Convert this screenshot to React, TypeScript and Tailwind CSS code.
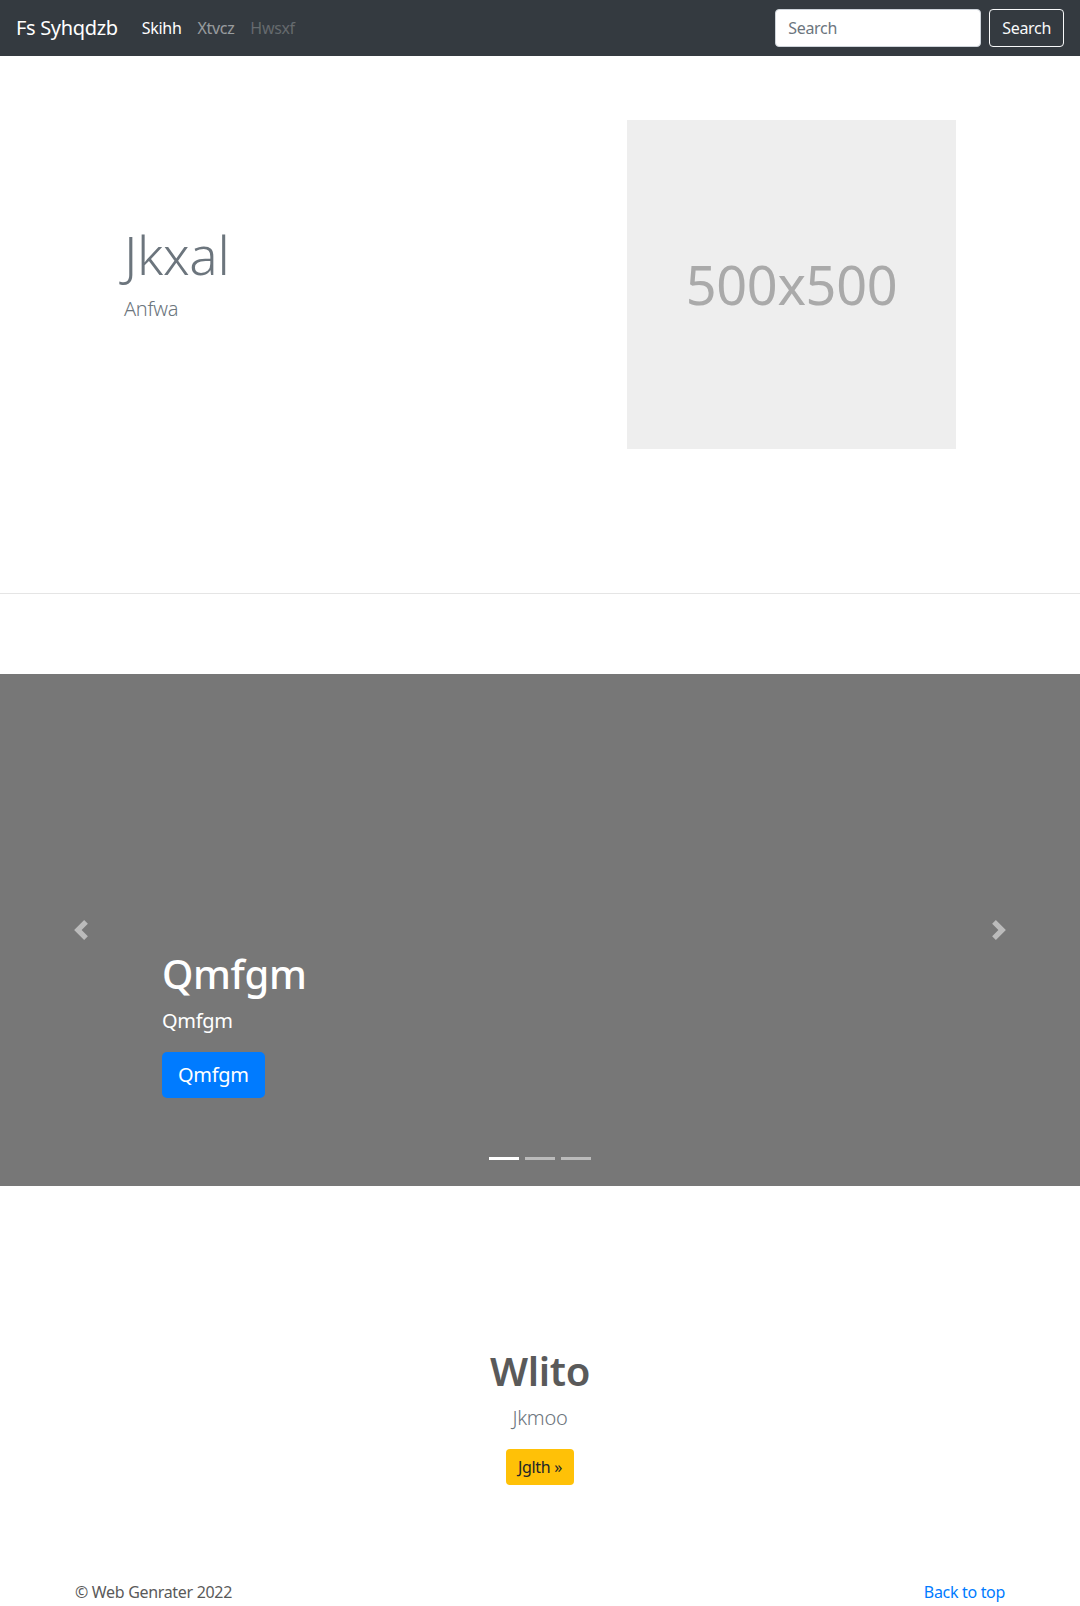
import React from "react";

const font = { fontFamily: '"Noto Sans", "Open Sans", Roboto, sans-serif' };

const Navbar = () => (
  <nav className="flex h-14 items-center bg-[#343a40] px-4">
    <a href="#" className="mr-4 py-[5px] text-xl leading-[1.5] text-white">
      Fs Syhqdzb
    </a>
    <ul className="flex items-center">
      <li>
        <a href="#" className="block px-2 py-2 text-base text-white">
          Skihh
        </a>
      </li>
      <li>
        <a href="#" className="block px-2 py-2 text-base text-white/50">
          Xtvcz
        </a>
      </li>
      <li>
        <span className="block px-2 py-2 text-base text-white/25">Hwsxf</span>
      </li>
    </ul>
    <form className="ml-auto flex items-center">
      <input
        type="text"
        placeholder="Search"
        className="h-[38px] w-[206px] rounded border border-[#ced4da] bg-white px-3 text-base text-[#495057] placeholder:text-[#6c757d] focus:outline-none"
      />
      <button
        type="button"
        className="ml-2 h-[38px] rounded border border-[#f8f9fa] px-3 text-base text-[#f8f9fa]"
      >
        Search
      </button>
    </form>
  </nav>
);

const Hero = () => (
  <section className="pt-16 pb-[144px]">
    <div className="mx-auto grid w-[960px] grid-cols-2 px-[15px]">
      <div className="flex flex-col justify-center pb-[22px] pl-[49px]">
        <h1 className="mb-2 text-[53px] leading-[1.2] font-light text-[#6c757d]">
          Jkxal
        </h1>
        <p className="text-xl leading-[1.5] font-light text-[#6c757d]">
          Anfwa
        </p>
      </div>
      <div className="pl-[87px]">
        <div className="flex h-[329px] w-[329px] items-center justify-center bg-[#eeeeee]">
          <span className="text-[54px] text-[#aaaaaa]">500x500</span>
        </div>
      </div>
    </div>
  </section>
);

const ChevronLeft = () => (
  <svg viewBox="0 0 8 8" className="h-5 w-5" fill="#fff">
    <path d="M5.25 0l-4 4 4 4 1.5-1.5L4.25 4l2.5-2.5L5.25 0z" />
  </svg>
);

const ChevronRight = () => (
  <svg viewBox="0 0 8 8" className="h-5 w-5" fill="#fff">
    <path d="M2.75 0l-1.5 1.5L3.75 4l-2.5 2.5L2.75 8l4-4-4-4z" />
  </svg>
);

const Carousel = () => (
  <div className="relative mt-20 h-[512px] bg-[#777777]">
    <a
      href="#"
      className="absolute top-0 bottom-0 left-0 flex w-[15%] items-center justify-center opacity-50"
    >
      <ChevronLeft />
    </a>
    <a
      href="#"
      className="absolute top-0 right-0 bottom-0 flex w-[15%] items-center justify-center opacity-50"
    >
      <ChevronRight />
    </a>
    <div className="absolute right-[15%] bottom-12 left-[15%] pb-5 text-left text-white">
      <h1 className="mb-2 text-[40px] leading-[1.2] font-medium">Qmfgm</h1>
      <p className="mb-4 text-xl leading-[1.5]">Qmfgm</p>
      <div className="mb-5">
        <a
          href="#"
          className="inline-block rounded-[5px] bg-[#007bff] px-4 py-2 text-xl leading-[1.5] text-white"
        >
          Qmfgm
        </a>
      </div>
    </div>
    <ol className="absolute right-0 bottom-[26px] left-0 flex justify-center">
      <li className="mx-[3px] h-[3px] w-[30px] bg-white" />
      <li className="mx-[3px] h-[3px] w-[30px] bg-white/50" />
      <li className="mx-[3px] h-[3px] w-[30px] bg-white/50" />
    </ol>
  </div>
);

const Featurette = () => (
  <section className="pt-[161px] text-center">
    <h2 className="mb-2 text-[40px] leading-[1.2] font-semibold text-[#5a5a5a]">
      Wlito
    </h2>
    <p className="mb-4 text-xl leading-[1.5] font-light text-[#6c757d]">
      Jkmoo
    </p>
    <a
      href="#"
      className="inline-block rounded bg-[#ffc107] px-3 py-[6px] text-base leading-[1.5] text-[#212529]"
    >
      Jglth &raquo;
    </a>
  </section>
);

const Footer = () => (
  <footer className="mx-auto mt-[95px] flex w-[960px] justify-between px-[15px] text-base leading-[1.5] text-[#5a5a5a]">
    <p>&copy; Web Genrater 2022</p>
    <a href="#" className="text-[#007bff]">
      Back to top
    </a>
  </footer>
);

export default function App() {
  return (
    <div className="min-h-screen bg-white tracking-[-0.02em]" style={font}>
      <Navbar />
      <Hero />
      <hr className="border-0 border-t border-black/10" />
      <Carousel />
      <Featurette />
      <Footer />
    </div>
  );
}
